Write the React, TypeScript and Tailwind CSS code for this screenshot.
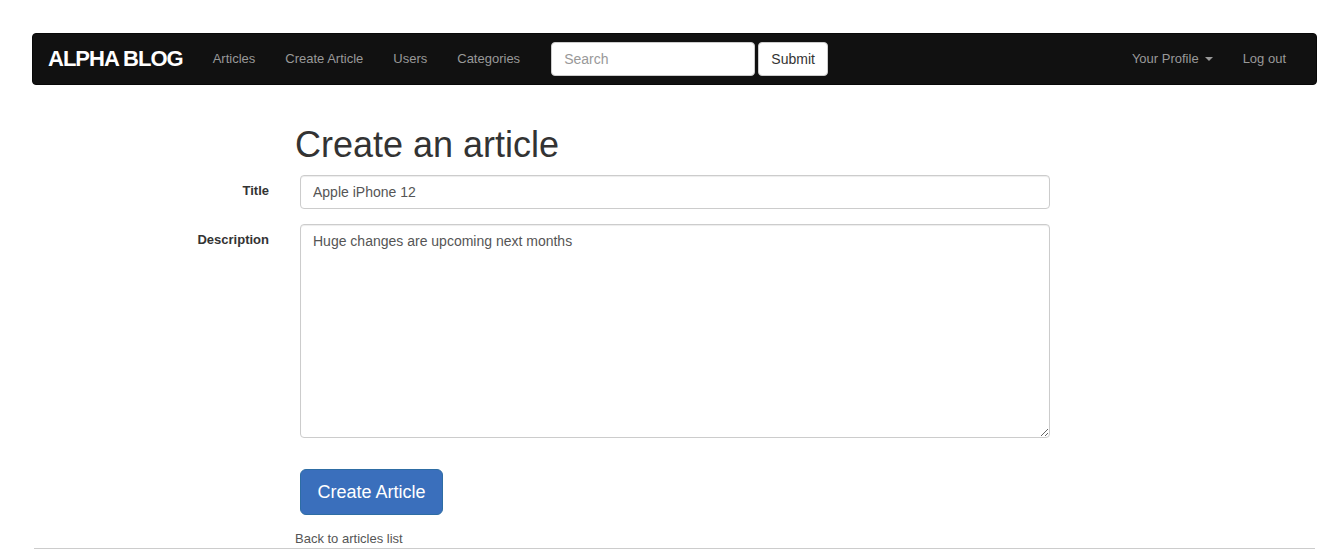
import { useState } from "react";

function Navbar() {
	const links = ["Articles", "Create Article", "Users", "Categories"];
	return (
		<nav className="h-[52px] bg-[#111111] border border-[#080808] rounded-[4px] flex items-center justify-between">
			<div className="flex items-center h-full">
				<a className="pl-[15px] pr-[15px] text-[22px] font-bold tracking-[-1px] text-white leading-[50px]">
					ALPHA BLOG
				</a>
				{links.map((l) => (
					<a key={l} className="px-[15px] text-[13px] text-[#999] leading-[50px]">
						{l}
					</a>
				))}
				<div className="flex items-center gap-[3px] pl-[16px]">
					<input
						type="text"
						placeholder="Search"
						className="w-[204px] h-[34px] rounded-[4px] bg-white border border-[#ccc] px-[12px] text-[14px] text-[#555] placeholder:text-[#999] outline-none"
					/>
					<button className="w-[70px] h-[34px] rounded-[4px] bg-white border border-[#ccc] text-[14px] text-[#333]">
						Submit
					</button>
				</div>
			</div>
			<div className="flex items-center pr-[15px]">
				<a className="px-[15px] text-[13px] text-[#999] leading-[50px] flex items-center">
					Your Profile
					<span className="ml-[6px] inline-block w-0 h-0 border-l-[4px] border-r-[4px] border-t-[4px] border-l-transparent border-r-transparent border-t-[#999]"></span>
				</a>
				<a className="px-[15px] text-[13px] text-[#999] leading-[50px]">Log out</a>
			</div>
		</nav>
	);
}

export default function App() {
	const [title, setTitle] = useState("Apple iPhone 12");
	const [desc, setDesc] = useState("Huge changes are upcoming next months");
	return (
		<div className="min-h-[549px] bg-white font-['Liberation_Sans',Arial,sans-serif] text-[#333] pt-[33px] pl-[32px] pr-[26px]">
			<Navbar />
			<div className="-ml-[32px]">
				<h1 className="mt-[40px] ml-[295px] text-[36px] leading-[40px] text-[#333]">
					Create an article
				</h1>
				<div className="flex mt-[10px]">
					<label className="w-[285px] pr-[16px] text-right text-[13px] font-bold pt-[6px]">
						Title
					</label>
					<input
						value={title}
						onChange={(e) => setTitle(e.target.value)}
						className="ml-[15px] w-[750px] h-[34px] rounded-[4px] border border-[#ccc] px-[12px] text-[14px] text-[#555] outline-none shadow-[inset_0_1px_1px_rgba(0,0,0,0.075)]"
					/>
				</div>
				<div className="flex mt-[15px]">
					<label className="w-[285px] pr-[16px] text-right text-[13px] font-bold pt-[6px]">
						Description
					</label>
					<textarea
						value={desc}
						onChange={(e) => setDesc(e.target.value)}
						className="ml-[15px] w-[750px] h-[214px] rounded-[4px] border border-[#ccc] px-[12px] py-[6px] text-[14px] leading-[20px] text-[#555] outline-none shadow-[inset_0_1px_1px_rgba(0,0,0,0.075)]"
					/>
				</div>
				<div className="flex ml-[300px] mt-[31px]">
					<button className="w-[143px] h-[46px] rounded-[6px] bg-[#3a6fbc] border border-[#2e6da4] text-white text-[18px]">
						Create Article
					</button>
				</div>
				<div className="ml-[295px] mt-[15px] text-[13px] text-[#555] leading-[18px]">
					<a>Back to articles list</a>
				</div>
			</div>
			<div className="mx-[2px] border-t border-[#ccc]"></div>
		</div>
	);
}
